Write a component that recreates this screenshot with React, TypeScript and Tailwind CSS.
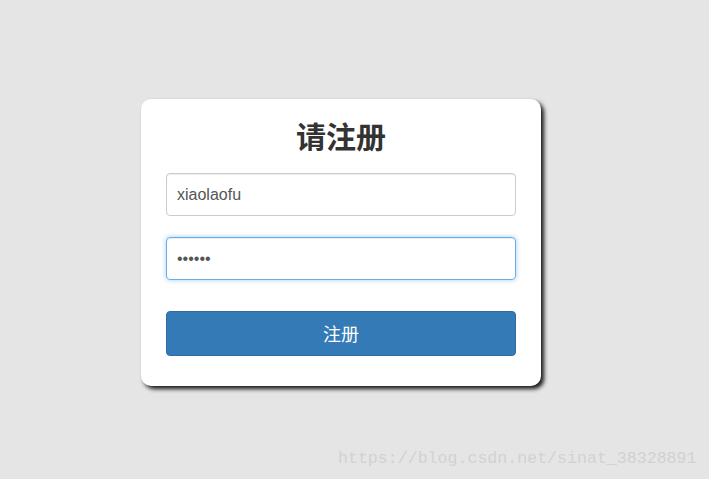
export default function App() {
  return (
    <div className="relative w-[709px] h-[479px] bg-[#e5e5e5] overflow-hidden font-['Liberation_Sans','Noto_Sans_CJK_SC',sans-serif]">
      <div className="pt-[99px] pl-[141px]">
        <div className="w-[400px] bg-white rounded-[10px] shadow-[3px_3px_4px_rgba(0,0,0,0.9)] px-[25px] pt-[16px] pb-[30px]">
          <h1 className="text-center text-[30px] leading-[40px] font-bold text-[#333] font-['Noto_Sans_CJK_SC',sans-serif] mb-[18px]">
            请注册
          </h1>
          <input
            type="text"
            defaultValue="xiaolaofu"
            className="block w-full h-[43px] px-[10px] text-[16px] text-[#555] border border-[#ccc] rounded-[4px] outline-none shadow-[inset_0_1px_1px_rgba(0,0,0,0.075)]"
          />
          <input
            type="password"
            defaultValue="123456"
            className="block w-full h-[43px] mt-[21px] px-[10px] text-[16px] text-[#555] border border-[#66afe9] rounded-[4px] outline-none shadow-[inset_0_1px_1px_rgba(0,0,0,0.075),0_0_5px_rgba(102,175,233,0.6)]"
          />
          <button className="block w-full h-[45px] mt-[31px] bg-[#337ab7] border border-[#2e6da4] rounded-[4px] text-white text-[18px] font-['Noto_Sans_CJK_SC',sans-serif]">
            注册
          </button>
        </div>
      </div>
      <div className="absolute left-[338px] top-[448px] text-[16.6px] leading-[22px] text-[#d2d2d2] font-['Liberation_Mono',monospace]">
        https://blog.csdn.net/sinat_38328891
      </div>
    </div>
  )
}
